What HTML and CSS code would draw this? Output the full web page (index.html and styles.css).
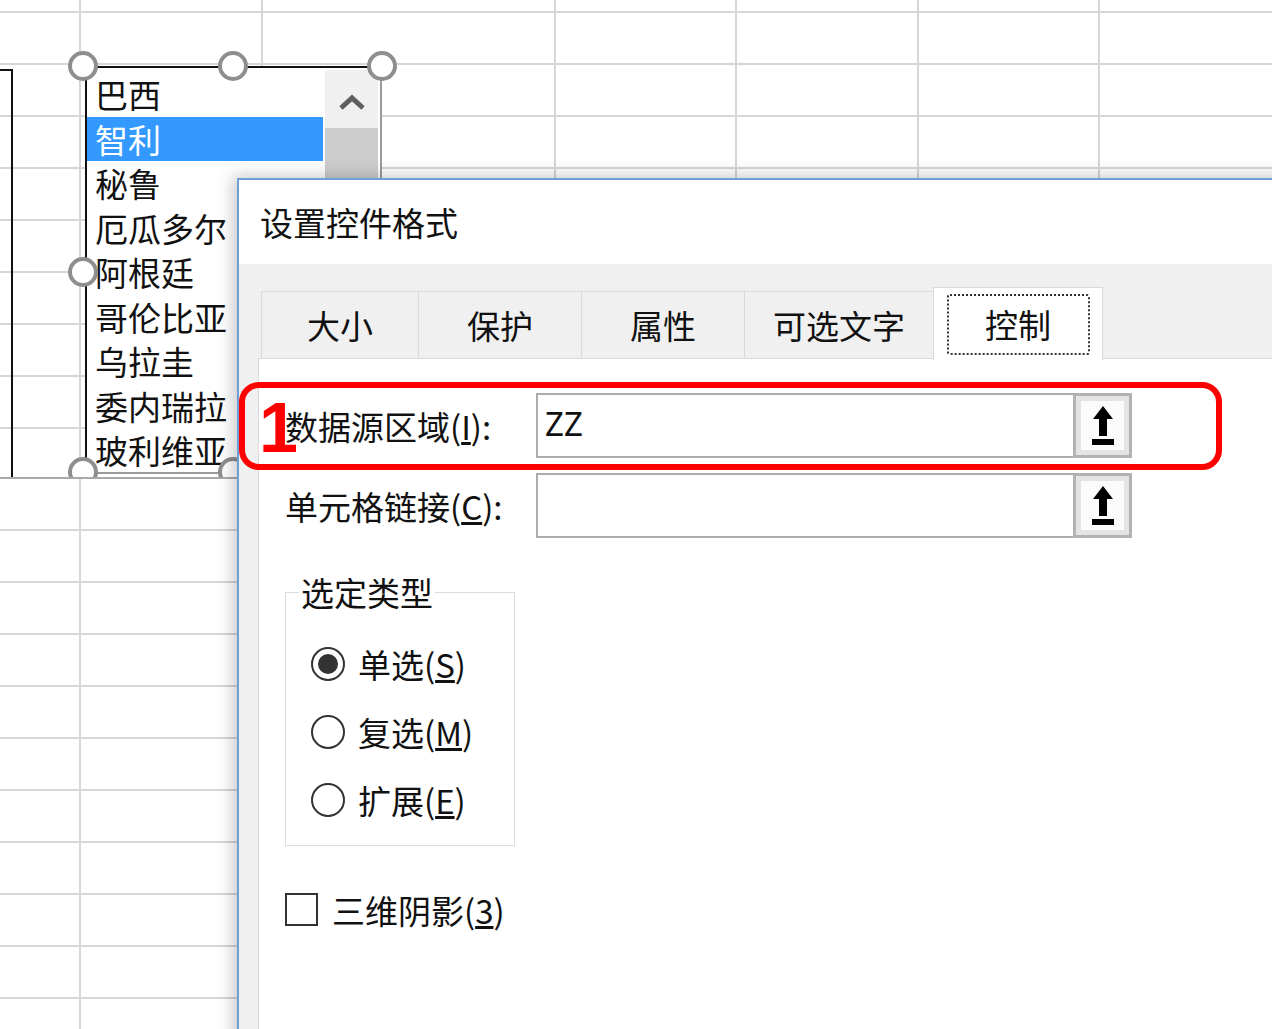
FILE: index.html
```html
<!DOCTYPE html>
<html lang="zh-CN">
<head>
    <meta charset="UTF-8">
    <meta name="viewport" content="width=device-width, initial-scale=1.0">
    <title>设置控件格式</title>
    <link rel="stylesheet" href="styles.css">
</head>
<body>
    <div class="sheet">
        <div class="pane pane-top grid">
            <div class="side-ctrl"></div>

            <div class="listbox">
                <ul class="listbox-items">
                    <li>巴西</li>
                    <li class="selected">智利</li>
                    <li>秘鲁</li>
                    <li>厄瓜多尔</li>
                    <li>阿根廷</li>
                    <li>哥伦比亚</li>
                    <li>乌拉圭</li>
                    <li>委内瑞拉</li>
                    <li>玻利维亚</li>
                </ul>
                <div class="scrollbar">
                    <div class="scroll-up">
                        <svg width="28" height="16" viewBox="0 0 28 16"><polyline points="3,14 14,4 25,14" fill="none" stroke="#5f5f5f" stroke-width="5"/></svg>
                    </div>
                    <div class="scroll-thumb"></div>
                </div>
            </div>

            <!-- tiradores de seleccion del control -->
            <span class="handle h-tl"></span>
            <span class="handle h-tc"></span>
            <span class="handle h-tr"></span>
            <span class="handle h-ml"></span>
            <span class="handle h-bl"></span>
            <span class="handle h-bc"></span>
        </div>
        <div class="pane-split"></div>
        <div class="pane pane-bottom grid"></div>

        <div class="dialog">
            <div class="dialog-title">设置控件格式</div>
            <div class="dialog-body">
                <div class="tabs">
                    <div class="tab tab-size">大小</div>
                    <div class="tab tab-protect">保护</div>
                    <div class="tab tab-props">属性</div>
                    <div class="tab tab-alt">可选文字</div>
                    <div class="tab tab-control active"><span class="tab-focus">控制</span></div>
                </div>

                <div class="tab-panel">
                    <div class="ref-row">
                        <label>数据源区域(<u>I</u>):</label>
                        <div class="ref-input">ZZ</div>
                        <button class="ref-btn">
                            <svg width="22" height="40" viewBox="0 0 22 40"><polygon points="11,0 21,13 15,13 15,30 7,30 7,13 1,13" fill="#000"/><rect x="0" y="33" width="22" height="6" fill="#000"/></svg>
                        </button>
                    </div>
                    <div class="ref-row">
                        <label>单元格链接(<u>C</u>):</label>
                        <div class="ref-input"></div>
                        <button class="ref-btn">
                            <svg width="22" height="40" viewBox="0 0 22 40"><polygon points="11,0 21,13 15,13 15,30 7,30 7,13 1,13" fill="#000"/><rect x="0" y="33" width="22" height="6" fill="#000"/></svg>
                        </button>
                    </div>

                    <fieldset class="group">
                        <legend>选定类型</legend>
                        <label class="radio checked"><span class="radio-circle"></span>单选(<u>S</u>)</label>
                        <label class="radio"><span class="radio-circle"></span>复选(<u>M</u>)</label>
                        <label class="radio"><span class="radio-circle"></span>扩展(<u>E</u>)</label>
                    </fieldset>

                    <label class="check"><span class="check-box"></span>三维阴影(<u>3</u>)</label>
                </div>
            </div>
        </div>

        <div class="callout"><span class="callout-num">1</span></div>
    </div>
</body>
</html>
```

FILE: styles.css
```css
* {
    box-sizing: border-box;
}

body {
    margin: 0;
    font-family: "Noto Sans CJK SC", "Noto Sans", sans-serif;
    color: #111;
}

.sheet {
    position: relative;
    width: 1272px;
    height: 1029px;
    overflow: hidden;
    background: #fff;
}

/* cuadricula de la hoja */
.grid {
    --row-line: 11px;
    background-color: #fff;
    background-image:
        linear-gradient(#d6d6d6, #d6d6d6),
        linear-gradient(#d6d6d6, #d6d6d6),
        linear-gradient(#d6d6d6, #d6d6d6),
        linear-gradient(#d6d6d6, #d6d6d6),
        linear-gradient(#d6d6d6, #d6d6d6),
        linear-gradient(#d6d6d6, #d6d6d6),
        linear-gradient(to bottom, transparent var(--row-line), #d6d6d6 var(--row-line), #d6d6d6 calc(var(--row-line) + 2px), transparent calc(var(--row-line) + 2px));
    background-size: 2px 100%, 2px 100%, 2px 100%, 2px 100%, 2px 100%, 2px 100%, 100% 52px;
    background-position: 79px 0, 261px 0, 554px 0, 735px 0, 917px 0, 1098px 0, 0 0;
    background-repeat: no-repeat, no-repeat, no-repeat, no-repeat, no-repeat, no-repeat, repeat;
}

.pane {
    position: relative;
    overflow: hidden;
}

.pane-top {
    height: 477px;
}

.pane-split {
    height: 2px;
    background: #a9a9a9;
}

.pane-bottom {
    --row-line: 50px;
    height: 550px;
}

.side-ctrl {
    position: absolute;
    left: -4px;
    top: 69px;
    width: 17px;
    height: 420px;
    border-top: 2px solid #111;
    border-right: 2px solid #111;
}

/* cuadro de lista */
.listbox {
    position: absolute;
    left: 85px;
    top: 66px;
    width: 297px;
    height: 408px;
    display: flex;
    background: #fff;
    border-top: 2px solid #111;
    border-left: 2px solid #111;
    border-right: 2px solid #9a9a9a;
    border-bottom: 2px solid #9a9a9a;
    overflow: hidden;
}

.listbox-items {
    flex: 1;
    list-style: none;
    margin: 0;
    padding: 4px 0 0 0;
}

.listbox-items li {
    height: 44.5px;
    line-height: 44.5px;
    padding-left: 8px;
    font-size: 33px;
    white-space: nowrap;
    color: #111;
}

.listbox-items li.selected {
    background: #3399ff;
    color: #fff;
}

.scrollbar {
    width: 53px;
    margin: 2px 2px 0 2px;
    display: flex;
    flex-direction: column;
}

.scroll-up {
    height: 58px;
    background: #f0f0f0;
    display: flex;
    align-items: center;
    justify-content: center;
    padding-top: 6px;
}

.scroll-thumb {
    flex: 1;
    background: #cdcdcd;
}

.handle {
    position: absolute;
    width: 30px;
    height: 30px;
    border: 4px solid #8e8e8e;
    border-radius: 50%;
    background: #fff;
}

.h-tl { left: 68px;  top: 51px; }
.h-tc { left: 218px; top: 51px; }
.h-tr { left: 367px; top: 51px; }
.h-ml { left: 68px;  top: 257px; }
.h-bl { left: 68px;  top: 457px; }
.h-bc { left: 218px; top: 457px; }

/* ventana de dialogo */
.dialog {
    position: absolute;
    left: 237px;
    top: 178px;
    width: 1100px;
    height: 900px;
    border: 2px solid #6e9fd6;
    background: #f0f0f0;
    box-shadow: -4px -2px 16px rgba(0, 0, 0, 0.22);
    display: flex;
    flex-direction: column;
}

.dialog-title {
    height: 84px;
    flex-shrink: 0;
    background: #fff;
    display: flex;
    align-items: center;
    padding-left: 21px;
    font-size: 33px;
}

.dialog-body {
    flex: 1;
    background: #f0f0f0;
    padding: 23px 0 0 19px;
}

.tabs {
    display: flex;
    align-items: flex-end;
    height: 71px;
    margin-left: 3px;
    position: relative;
    z-index: 1;
}

.tab {
    height: 67px;
    display: flex;
    align-items: center;
    justify-content: center;
    border: 1px solid #d9d9d9;
    border-bottom: none;
    margin-right: -1px;
    font-size: 33px;
    line-height: 1;
    color: #111;
}

.tab-size    { width: 158px; }
.tab-protect { width: 164px; }
.tab-props   { width: 164px; }
.tab-alt     { width: 190px; }

.tab.active {
    width: 170px;
    height: 73px;
    margin-bottom: -2px;
    margin-right: 0;
    background: #fff;
    align-items: flex-start;
    padding-top: 6px;
    position: relative;
}

.tab-focus {
    width: 143px;
    height: 61px;
    border: 2px dotted #333;
    border-radius: 3px;
    display: flex;
    align-items: center;
    justify-content: center;
}

.tab-panel {
    height: 720px;
    background: #fff;
    border: 1px solid #d9d9d9;
    padding: 34px 0 0 26px;
}

.ref-row {
    display: grid;
    grid-template-columns: 251px 537px 59px;
    height: 65px;
    align-items: center;
}

.ref-row + .ref-row {
    margin-top: 15px;
}

.ref-row label {
    font-size: 33px;
    white-space: nowrap;
}

.ref-input {
    height: 100%;
    border: 2px solid #acacac;
    border-right: none;
    padding-left: 7px;
    font-family: "Noto Sans", "Liberation Sans", sans-serif;
    font-size: 33px;
    line-height: 58px;
}

.ref-btn {
    height: 100%;
    margin: 0;
    padding: 0;
    border: 3px solid #b2b2b2;
    background: #fbfbfb;
    box-shadow: inset 0 0 0 5px #e4e4e4;
    display: flex;
    align-items: center;
    justify-content: center;
}

.group {
    width: 230px;
    margin: 34px 0 0 0;
    padding: 18px 0 11px 13px;
    border: 1px solid #dcdcdc;
}

.group legend {
    padding: 0 2px;
    font-size: 33px;
    line-height: 40px;
}

.radio {
    height: 68px;
    display: flex;
    align-items: center;
    padding-left: 12px;
    font-size: 33px;
}

.radio-circle {
    width: 34px;
    height: 34px;
    border: 2px solid #333;
    border-radius: 50%;
    margin-right: 13px;
    display: flex;
    align-items: center;
    justify-content: center;
    flex-shrink: 0;
}

.radio.checked .radio-circle::after {
    content: "";
    width: 20px;
    height: 20px;
    border-radius: 50%;
    background: #333;
}

.check {
    margin-top: 47px;
    height: 33px;
    display: flex;
    align-items: center;
    font-size: 33px;
}

.check-box {
    width: 33px;
    height: 33px;
    border: 2px solid #333;
    margin-right: 14px;
}

/* marca roja de anotacion */
.callout {
    position: absolute;
    left: 239px;
    top: 382px;
    width: 983px;
    height: 88px;
    border: 6px solid #ff0000;
    border-radius: 20px;
}

.callout-num {
    position: absolute;
    left: 14px;
    top: 5px;
    font-family: "Liberation Sans", sans-serif;
    font-weight: 700;
    font-size: 70px;
    line-height: 1;
    color: #ff0000;
}
```
